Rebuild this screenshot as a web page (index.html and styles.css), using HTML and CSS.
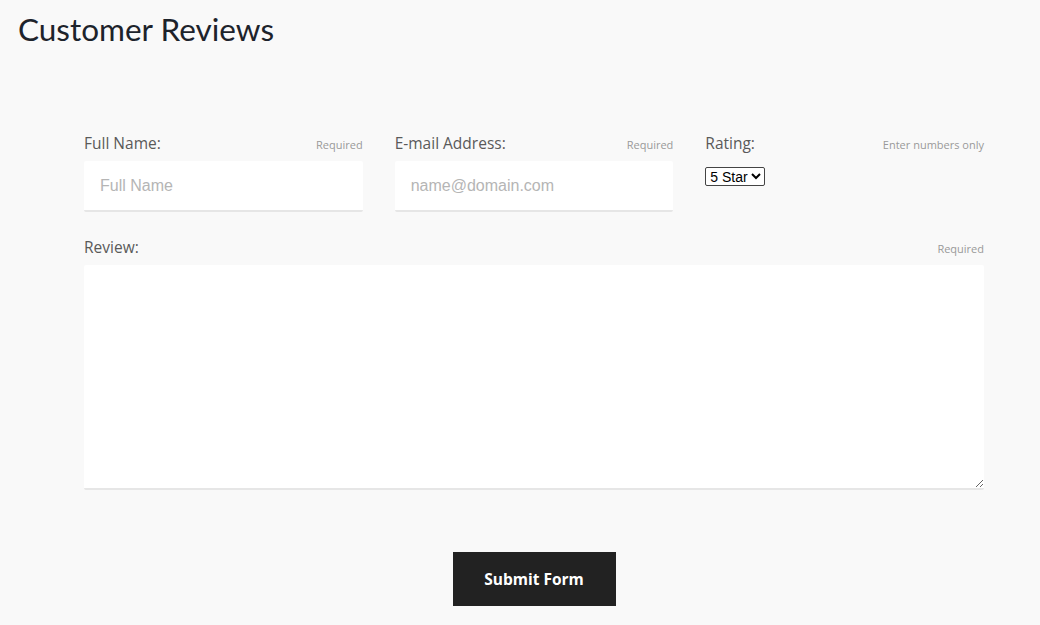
FILE: index.html
```html
<!DOCTYPE html>
<html lang="en">

<head>
    <meta charset="UTF-8">
    <meta name="viewport" content="width=device-width, initial-scale=1.0">
    <title>Customer Reviews</title>
    <link rel="stylesheet" href="styles.css">
</head>

<body>
    <h1 class="page-title">Customer Reviews</h1>

    <!-- Review form -->
    <form class="review-form">
        <div class="form-row">
            <div class="field">
                <div class="field-head">
                    <label for="fullName">Full Name:</label>
                    <span class="hint">Required</span>
                </div>
                <input type="text" id="fullName" class="text-input" placeholder="Full Name">
            </div>
            <div class="field">
                <div class="field-head">
                    <label for="email">E-mail Address:</label>
                    <span class="hint">Required</span>
                </div>
                <input type="email" id="email" class="text-input" placeholder="name@domain.com">
            </div>
            <div class="field">
                <div class="field-head">
                    <label for="rating">Rating:</label>
                    <span class="hint">Enter numbers only</span>
                </div>
                <select id="rating" class="rating-select">
                    <option>5 Star</option>
                    <option>4 Star</option>
                    <option>3 Star</option>
                    <option>2 Star</option>
                    <option>1 Star</option>
                </select>
            </div>
        </div>

        <div class="field">
            <div class="field-head">
                <label for="review">Review:</label>
                <span class="hint">Required</span>
            </div>
            <textarea id="review" class="review-input"></textarea>
        </div>

        <div class="form-actions">
            <button type="button" class="submit-btn">Submit Form</button>
        </div>
    </form>
</body>

</html>
```

FILE: styles.css
```css
body {
    margin: 0;
    padding: 0;
    background-color: #f9f9f9;
    font-family: "Open Sans", "Noto Sans", sans-serif;
    color: #555;
}

/* Page heading */
.page-title {
    margin: 0;
    padding: 10px 18px 0;
    font-family: Lato, "Noto Sans", sans-serif;
    font-weight: 400;
    font-size: 31.5px;
    line-height: 38px;
    color: #1d232b;
}

/* Form layout */
.review-form {
    width: 900px;
    margin: 83px 0 0 84px;
}

.form-row {
    display: grid;
    grid-template-columns: repeat(3, 1fr);
    gap: 32px;
    margin-bottom: 23px;
}

.field-head {
    display: flex;
    justify-content: space-between;
    align-items: baseline;
    height: 22px;
    padding-top: 1px;
    margin-bottom: 7px;
}

.field-head label {
    font-size: 15.5px;
    color: #5a5a5a;
}

.hint {
    font-size: 11px;
    color: #9a9a9a;
}

/* Inputs */
.text-input {
    box-sizing: border-box;
    width: 100%;
    height: 51px;
    padding: 0 16px;
    border: none;
    border-bottom: 2px solid #e6e6e6;
    border-radius: 2px;
    background-color: #fff;
    font-family: "Liberation Sans", Arial, sans-serif;
    font-size: 16px;
    color: #333;
    outline: none;
}

.text-input::placeholder {
    color: #b5b5b5;
}

.rating-select {
    margin-top: 6px;
    font-family: "Liberation Sans", Arial, sans-serif;
    font-size: 14px;
    color: #000;
    background-color: #fff;
    border: 1px solid #444;
    border-radius: 2px;
    height: 19px;
}

.review-input {
    box-sizing: border-box;
    display: block;
    width: 100%;
    height: 225px;
    border: none;
    border-bottom: 2px solid #e6e6e6;
    border-radius: 2px;
    background-color: #fff;
    padding: 10px 16px;
    font-family: "Liberation Sans", Arial, sans-serif;
    font-size: 16px;
    outline: none;
}

/* Submit button */
.form-actions {
    display: flex;
    justify-content: center;
    margin-top: 62px;
}

.submit-btn {
    width: 163px;
    height: 54px;
    border: none;
    background-color: #222;
    color: #fff;
    font-family: "Open Sans", "Noto Sans", sans-serif;
    font-weight: 700;
    font-size: 15.5px;
    cursor: pointer;
}
```
